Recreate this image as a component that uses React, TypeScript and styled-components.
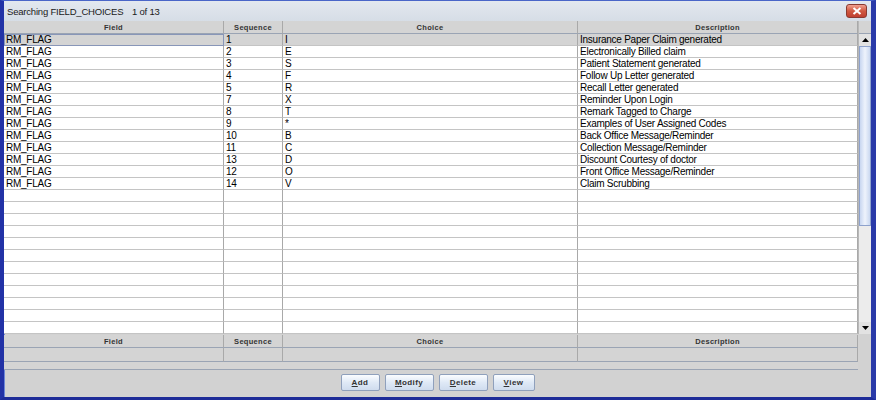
import React from "react";
import styled, { createGlobalStyle } from "styled-components";

const Global = createGlobalStyle`
  html, body { margin: 0; padding: 0; background: #fff; }
  body { width: 876px; height: 400px; overflow: hidden; font-family: "Liberation Sans", Arial, sans-serif; }
`;

const Window = styled.div`
  box-sizing: border-box;
  width: 876px;
  height: 400px;
  display: flex;
  flex-direction: column;
  background: #d2d2d2;
  border-left: 4px solid #2232a6;
  border-right: 5px solid #2a3aa8;
  border-top: 1px solid #4a66c8;
  border-bottom: 3px solid #1e2c98;
  box-shadow: inset 1px 0 0 #6c86d8;
`;

const TitleBar = styled.div`
  height: 20px;
  flex: none;
  display: flex;
  align-items: center;
  background: linear-gradient(#e3e8ef, #d6dde6);
  font-size: 9.5px;
  letter-spacing: -0.2px;
  color: #1a1a1a;
  padding-left: 3px;
  position: relative;
  white-space: nowrap;
`;

const TitleText = styled.span`
  display: block;
  width: 125px;
  flex: none;
  overflow: hidden;
`;

const CloseButton = styled.div`
  position: absolute;
  right: 4px;
  top: 3px;
  width: 21px;
  height: 14px;
  box-sizing: border-box;
  border: 1px solid #8a3a30;
  border-radius: 3px;
  background: linear-gradient(#f0a090, #d05840 50%, #c04030);
  display: flex;
  align-items: center;
  justify-content: center;
`;

const Grid = styled.div`
  display: grid;
  grid-template-columns: 220px 59px 295px 280px;
`;

const HeadCell = styled.div`
  height: 13px;
  box-sizing: border-box;
  display: flex;
  align-items: center;
  justify-content: center;
  font-size: 7.5px;
  font-weight: bold;
  letter-spacing: 0.3px;
  color: #333;
  background: #d4d4d4;
  border-right: 1px solid #a9a9a9;
  border-bottom: 1px solid #9aa4b4;
`;

const TableArea = styled.div`
  display: flex;
`;

const TableMain = styled.div`
  display: flex;
  flex-direction: column;
`;

const Body = styled.div`
  background: #fff;
  display: grid;
  grid-template-columns: 220px 59px 295px 280px;
  grid-auto-rows: 12px;
  height: 300px;
  overflow: hidden;
`;

const Cell = styled.div<{ $sel?: boolean; $focus?: boolean }>`
  box-sizing: border-box;
  height: 12px;
  font-size: 10px;
  letter-spacing: -0.25px;
  line-height: 11px;
  padding-left: 2px;
  color: #000;
  white-space: nowrap;
  overflow: hidden;
  background: ${(p) => (p.$sel ? "#d4d4d4" : "#fff")};
  border-right: 1px solid #a9a9a9;
  border-bottom: 1px solid #c4c4c4;
  ${(p) => (p.$focus ? "outline: 1px solid #8896b8; outline-offset: -1px;" : "")}
`;

const ScrollBar = styled.div`
  width: 13px;
  display: flex;
  flex-direction: column;
  background: #ececec;
  border-left: 1px solid #b8b8b8;
  box-sizing: border-box;
`;

const ScrollHead = styled.div`
  height: 13px;
  flex: none;
  background: #d4d4d4;
  border-bottom: 1px solid #9aa4b4;
  box-sizing: border-box;
`;

const ScrollBtn = styled.div`
  height: 12px;
  flex: none;
  display: flex;
  align-items: center;
  justify-content: center;
  background: #e2e2e2;
`;

const Thumb = styled.div`
  height: 180px;
  flex: none;
  box-sizing: border-box;
  border: 1px solid #8ea2cc;
  background: linear-gradient(90deg, #c8d6f0, #eef3fc 50%, #cad8f0);
`;

const Track = styled.div`
  flex: 1;
`;

const BottomGrid = styled.div`
  display: grid;
  grid-template-columns: 220px 59px 295px 280px;
  margin-top: 1px;
`;

const EmptyCell = styled.div`
  height: 13px;
  background: #d4d4d4;
  border-right: 1px solid #a9a9a9;
  border-bottom: 1px solid #9aa4b4;
`;

const StripBar = styled.div`
  height: 7px;
  width: 854px;
  border-bottom: 1px solid #9aa4b4;
  background: #d4d4d4;
`;

const ButtonRow = styled.div`
  flex: 1;
  display: flex;
  justify-content: center;
  align-items: center;
  gap: 5px;
  padding-bottom: 2px;
`;

const Button = styled.div<{ $w: number }>`
  width: ${(p) => p.$w}px;
  height: 17px;
  box-sizing: border-box;
  border: 1px solid #8fa0bc;
  border-radius: 2px;
  background: linear-gradient(#fbfdff, #dfe9f6 50%, #cfdcee);
  font-size: 8px;
  font-weight: bold;
  letter-spacing: 0.4px;
  color: #333;
  display: flex;
  align-items: center;
  justify-content: center;
`;

const U = styled.span`
  text-decoration: underline;
`;

const rows: [string, string, string, string][] = [
  ["RM_FLAG", "1", "I", "Insurance Paper Claim generated"],
  ["RM_FLAG", "2", "E", "Electronically Billed claim"],
  ["RM_FLAG", "3", "S", "Patient Statement generated"],
  ["RM_FLAG", "4", "F", "Follow Up Letter generated"],
  ["RM_FLAG", "5", "R", "Recall Letter generated"],
  ["RM_FLAG", "7", "X", "Reminder Upon Login"],
  ["RM_FLAG", "8", "T", "Remark Tagged to Charge"],
  ["RM_FLAG", "9", "*", "Examples of User Assigned Codes"],
  ["RM_FLAG", "10", "B", "Back Office Message/Reminder"],
  ["RM_FLAG", "11", "C", "Collection Message/Reminder"],
  ["RM_FLAG", "13", "D", "Discount Courtesy of doctor"],
  ["RM_FLAG", "12", "O", "Front Office Message/Reminder"],
  ["RM_FLAG", "14", "V", "Claim Scrubbing"],
];

const headers = ["Field", "Sequence", "Choice", "Description"];

export default function App() {
  const all = [...rows];
  while (all.length < 25) all.push(["", "", "", ""]);
  return (
    <Window>
      <Global />
      <TitleBar>
        <TitleText>Searching FIELD_CHOICES</TitleText>
        <span>1 of 13</span>
        <CloseButton>
          <svg width="10" height="8" viewBox="0 0 10 8">
            <path d="M1.5 1 L8.5 7 M8.5 1 L1.5 7" stroke="#fff" strokeWidth="2" />
          </svg>
        </CloseButton>
      </TitleBar>
      <TableArea>
        <TableMain>
          <Grid>
            {headers.map((h) => (
              <HeadCell key={h}>{h}</HeadCell>
            ))}
          </Grid>
          <Body>
            {all.map((r, i) =>
              r.map((c, j) => (
                <Cell key={`${i}-${j}`} $sel={i === 0} $focus={i === 0 && j === 0}>
                  {c}
                </Cell>
              ))
            )}
          </Body>
        </TableMain>
        <ScrollBar>
          <ScrollHead />
          <ScrollBtn>
            <svg width="7" height="4" viewBox="0 0 7 4">
              <path d="M0 4 L3.5 0 L7 4 Z" fill="#000" />
            </svg>
          </ScrollBtn>
          <Thumb />
          <Track />
          <ScrollBtn>
            <svg width="7" height="4" viewBox="0 0 7 4">
              <path d="M0 0 L3.5 4 L7 0 Z" fill="#000" />
            </svg>
          </ScrollBtn>
        </ScrollBar>
      </TableArea>
      <BottomGrid>
        {headers.map((h) => (
          <HeadCell key={h}>{h}</HeadCell>
        ))}
        {headers.map((h) => (
          <EmptyCell key={h} />
        ))}
      </BottomGrid>
      <StripBar />
      <ButtonRow>
        <Button $w={39}>
          <U>A</U>dd
        </Button>
        <Button $w={49}>
          <U>M</U>odify
        </Button>
        <Button $w={49}>
          <U>D</U>elete
        </Button>
        <Button $w={42}>
          <U>V</U>iew
        </Button>
      </ButtonRow>
    </Window>
  );
}
